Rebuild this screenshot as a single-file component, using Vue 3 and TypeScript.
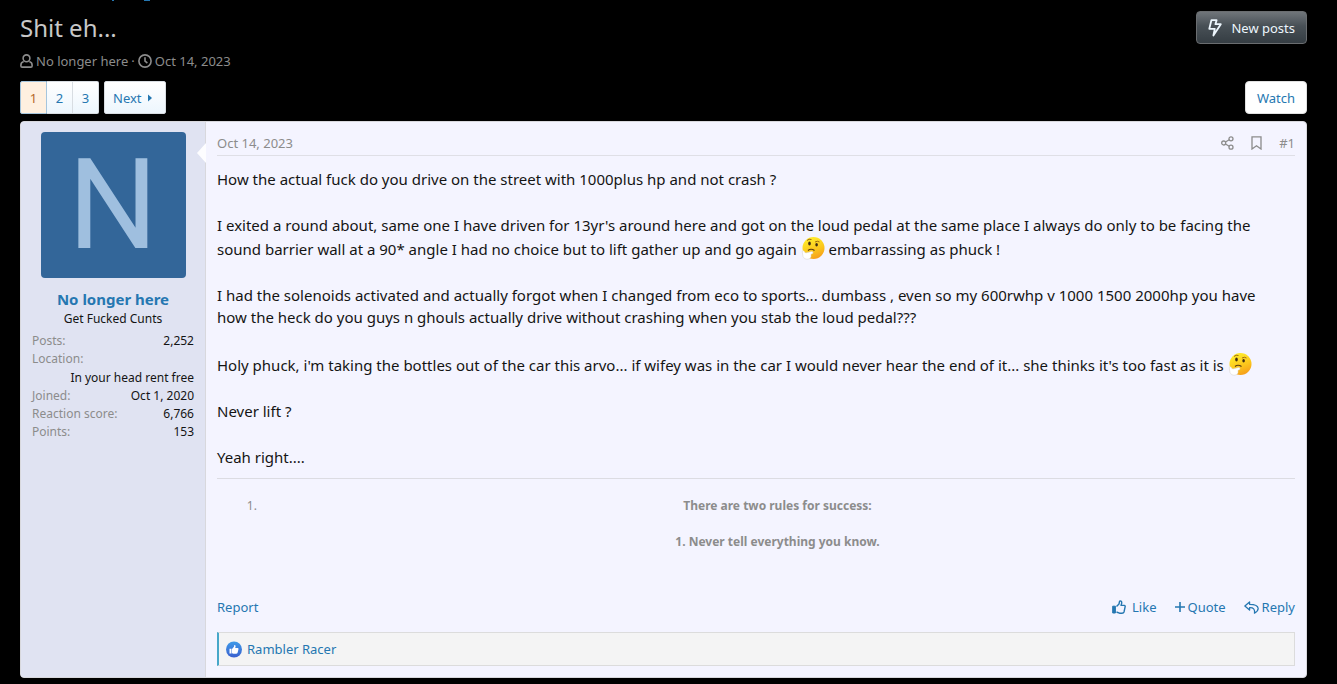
<script setup lang="ts">
import { h } from 'vue'

interface Stat {
  label: string
  value: string
  stacked?: boolean
}

const stats: Stat[] = [
  { label: 'Posts', value: '2,252' },
  { label: 'Location', value: 'In your head rent free', stacked: true },
  { label: 'Joined', value: 'Oct 1, 2020' },
  { label: 'Reaction score', value: '6,766' },
  { label: 'Points', value: '153' },
]

const pages: number[] = [1, 2, 3]

const ThinkingFace = () =>
  h('svg', { viewBox: '0 0 24 24', width: 24, height: 24, role: 'img', 'aria-label': 'Thinking' }, [
    h('defs', [
      h('linearGradient', { id: 'face', x1: 0.3, y1: 0, x2: 0.7, y2: 1 }, [
        h('stop', { offset: 0.1, 'stop-color': '#ffe82a' }),
        h('stop', { offset: 0.6, 'stop-color': '#fbc51c' }),
        h('stop', { offset: 1, 'stop-color': '#f59a1b' }),
      ]),
    ]),
    h('circle', { cx: 12.5, cy: 12, r: 11, fill: 'url(#face)' }),
    h('path', { d: 'M6 4.500Q8 2.500 10.500 3.500M14 6Q16.500 4.500 18.500 6', fill: 'none', stroke: '#a06c12', 'stroke-width': 1 }),
    h('ellipse', { cx: 8.5, cy: 7.5, rx: 1.3, ry: 1.9, fill: '#3e2b14' }),
    h('ellipse', { cx: 15.6, cy: 8.7, rx: 1.3, ry: 1.8, fill: '#3e2b14' }),
    h('path', { d: 'M7 14.500Q10 12 13.500 14.500', fill: 'none', stroke: '#5c3b10', 'stroke-width': 1.2 }),
    h('path', {
      d: 'M1.200 15.500Q2.500 14 3.700 16L4.700 17L10.500 15.500Q12.800 15.500 11.800 17.500L10 18.300L10 21Q9 23.300 6 23.300Q3 23.300 2 20.500Z',
      fill: '#fff',
      stroke: '#d5d0c8',
      'stroke-width': 0.5,
    }),
  ])
</script>

<template>
  <main class="page">
    <svg class="crumb-tails" width="60" height="2" viewBox="0 0 60 2" aria-hidden="true">
      <path d="M12 0h2M44 0h6" stroke="#2577b1" stroke-width="2" />
    </svg>
    <header class="head">
      <div>
        <h1>Shit eh...</h1>
        <p class="meta">
          <svg width="13" height="14" viewBox="0 0 13 14" fill="none" stroke="currentColor" stroke-width="1.600">
            <circle cx="6.500" cy="4.300" r="3.400" />
            <path d="M3.700 7.500Q.9 8.300.9 11V12q0 1.100 1.200 1.100H10.900q1.200 0 1.200-1.100V11Q12.100 8.300 9.300 7.500" />
          </svg>
          <a href="#author">No longer here</a>
          <span>·</span>
          <svg width="14" height="14" viewBox="0 0 14 14" fill="none" stroke="currentColor" stroke-width="1.600">
            <circle cx="7" cy="7" r="6.100" /><path d="M7 3.200V7.200L9.400 9" />
          </svg>
          <a href="#date">Oct 14, 2023</a>
        </p>
      </div>
      <button type="button" class="new-posts">
        <svg width="14" height="18" viewBox="0 0 14 18" fill="none" stroke="currentColor" stroke-width="1.800" stroke-linejoin="round">
          <path d="M3.400 1.200H8.600L7.400 5.200H12.800L5.400 16.500L6.800 9.800H1.300Z" />
        </svg>
        New posts
      </button>
    </header>

    <div class="toolbar">
      <nav class="nav" aria-label="Pages">
        <div class="pages">
          <a v-for="p in pages" :key="p" :href="'#page-' + p" :class="{ current: p === 1 }">{{ p }}</a>
        </div>
        <a class="next" href="#page-2">Next
          <svg width="4" height="8" viewBox="0 0 4 8"><path d="M0 0.500L4 4L0 7.500Z" fill="currentColor" /></svg>
        </a>
      </nav>
      <button type="button" class="watch">Watch</button>
    </div>

    <article class="post">
      <aside class="user">
        <a class="avatar" href="#author" aria-label="No longer here profile"><span>N</span></a>
        <a class="name" href="#author">No longer here</a>
        <p class="rank">Get Fucked Cunts</p>
        <dl>
          <div v-for="s in stats" :key="s.label" :class="{ stacked: s.stacked }">
            <dt>{{ s.label }}:</dt>
            <dd>{{ s.value }}</dd>
          </div>
        </dl>
      </aside>

      <section class="main">
        <header class="post-head">
          <a href="#date">Oct 14, 2023</a>
          <div class="post-tools">
            <a href="#share" aria-label="Share">
              <svg width="13" height="14" viewBox="0 0 13 14" fill="none" stroke="currentColor" stroke-width="1.300">
                <circle cx="2.700" cy="7" r="2" /><circle cx="10" cy="2.800" r="2" /><circle cx="10" cy="11.200" r="2" />
                <path d="M4.500 6L8.200 3.800M4.500 8L8.200 10.200" />
              </svg>
            </a>
            <a href="#bookmark" aria-label="Bookmark">
              <svg width="11" height="14" viewBox="0 0 11 14" fill="none" stroke="currentColor" stroke-width="1.300">
                <path d="M1 .8H10V13L5.500 9.800L1 13Z" />
              </svg>
            </a>
            <a href="#post-1">#1</a>
          </div>
        </header>

        <div class="body">
          <p>How the actual fuck do you drive on the street with 1000plus hp and not crash ?</p>
          <p>
            I exited a round about, same one I have driven for 13yr's around here and got on the loud pedal at the same place I always do only to be facing the<br>
            sound barrier wall at a 90* angle I had no choice but to lift gather up and go again <ThinkingFace class="smilie" /> embarrassing as phuck !
          </p>
          <p>
            I had the solenoids activated and actually forgot when I changed from eco to sports... dumbass , even so my 600rwhp v 1000 1500 2000hp you have<br>
            how the heck do you guys n ghouls actually drive without crashing when you stab the loud pedal???
          </p>
          <p>
            Holy phuck, i'm taking the bottles out of the car this arvo... if wifey was in the car I would never hear the end of it... she thinks it's too fast as it is <ThinkingFace class="smilie" />
          </p>
          <p>Never lift ?</p>
          <p>Yeah right....</p>
        </div>

        <div class="signature">
          <ol>
            <li><b>There are two rules for success:</b><b>1. Never tell everything you know.</b></li>
          </ol>
        </div>

        <footer>
          <a href="#report">Report</a>
          <div class="actions">
            <a class="like" href="#like">
              <svg width="14" height="14" viewBox="0 0 14 14" fill="none" stroke="currentColor" stroke-width="1.400" stroke-linejoin="round">
                <path d="M4.500 6.500L7 4L7.600 1.200Q9.900.5 9.700 3.200L9 5.400H12.200Q13.600 5.700 13 7.300L12 12Q11.600 13.200 10 13.200H7.500L4.500 12" />
                <path d="M.7 6.200H3.400V13H.7Z" fill="currentColor" stroke-width="1" />
              </svg>
              Like
            </a>
            <a href="#quote">
              <svg width="10" height="10" viewBox="0 0 10 10" stroke="currentColor" stroke-width="1.600"><path d="M5 0V10M0 5H10" /></svg>
              Quote
            </a>
            <a href="#reply">
              <svg width="15" height="13" viewBox="0 0 14 12" fill="none" stroke="currentColor" stroke-width="1.200" stroke-linejoin="round">
                <path d="M5.200.8L.8 4.600L5.200 8.400V6.200Q10.500 5.800 9.800 11.200Q13.400 9.500 13.200 6.700Q12.800 3 5.200 3Z" />
              </svg>
              Reply
            </a>
          </div>
        </footer>

        <div class="reactions">
          <svg width="16" height="17" viewBox="0 0 16 16" aria-label="Like" role="img">
            <defs>
              <linearGradient id="like" x1="0" y1="0" x2="0" y2="1"><stop offset="0" stop-color="#3f9be8" /><stop offset="1" stop-color="#3a60cf" /></linearGradient>
            </defs>
            <circle cx="8" cy="8" r="8" fill="url(#like)" />
            <path d="M3.500 7.200H5.500V12H3.500ZM6 7.500L8 5.300L8.300 3.500Q9.800 3.200 9.600 5L9.200 6.500H11.800Q12.900 6.800 12.400 8L11.500 11.500Q11.200 12.200 10 12.200H7.500L6 11.700Z" fill="#fff" />
          </svg>
          <a href="#reactions">Rambler Racer</a>
        </div>
      </section>
    </article>
  </main>
</template>

<style>
body {
  margin: 0;
  background: #000;
}
</style>

<style scoped>
.page {
  position: relative;
  padding: 11px 30px 5px 20px;
  font-family: "Noto Sans", "Open Sans", sans-serif;
  font-size: 13px;
  line-height: 18px;
  color: #141414;
}
.page * {
  box-sizing: border-box;
}
h1, p, dl, dd, ol {
  margin: 0;
}
a {
  color: #2577b1;
  text-decoration: none;
}
button {
  font: inherit;
  cursor: pointer;
}
svg {
  flex: none;
}
.crumb-tails {
  position: absolute;
  top: 0;
  left: 100px;
}
.head,
.toolbar {
  display: flex;
  justify-content: space-between;
  align-items: flex-start;
}
h1 {
  font-size: 24px;
  line-height: 34px;
  font-weight: 400;
  color: #c8c8c8;
}
.meta {
  display: flex;
  align-items: center;
  gap: 3px;
  margin-top: 7px;
  color: #8c8c8c;
}
.meta a {
  color: inherit;
}
.new-posts {
  display: flex;
  align-items: center;
  gap: 9px;
  height: 33px;
  padding: 0 11px;
  border: 1px solid #6a6d70;
  border-radius: 4px;
  background: linear-gradient(#70757a, #485056 45%, #353d43);
  color: #edf6fd;
}
.toolbar {
  margin: 11px 0 7px;
}
.nav {
  display: flex;
  gap: 5px;
}
.pages {
  display: flex;
}
.pages a,
.next {
  display: flex;
  align-items: center;
  justify-content: center;
  min-width: 26px;
  height: 33px;
  border: 1px solid #d8dde2;
  border-left-width: 0;
  background: linear-gradient(#fff, #edf6fd);
}
.pages a:last-child {
  border-radius: 0 2px 2px 0;
}
.pages a.current {
  min-width: 27px;
  border: 1px solid #a5c5dd;
  border-radius: 2px 0 0 2px;
  background: #fff0e0;
  color: #b5692a;
}
.next {
  gap: 6px;
  padding: 0 13px 0 8px;
  border-left-width: 1px;
  border-radius: 2px;
}
.watch {
  height: 33px;
  padding: 0 11px;
  border: 1px solid #e0e0e0;
  border-radius: 4px;
  background: #fff;
  color: #2577b1;
}
.post {
  display: flex;
  border: 1px solid #d8d8dd;
  border-radius: 4px;
  background: #f4f4ff;
}
.user {
  position: relative;
  flex: none;
  width: 185px;
  padding: 10px 11px;
  border-right: 1px solid #d8d8dd;
  border-radius: 3px 0 0 3px;
  background: #e0e3f2;
  text-align: center;
}
.user::after {
  content: "";
  position: absolute;
  top: 21px;
  right: -1px;
  width: 9px;
  height: 20px;
  background: #fdfdff;
  clip-path: polygon(100% 0, 0 50%, 100% 100%);
}
.avatar {
  display: flex;
  align-items: center;
  justify-content: center;
  width: 145px;
  height: 146px;
  margin: 0 auto;
  border-radius: 4px;
  background: #336699;
  color: #9fbfdf;
  font-family: Roboto, sans-serif;
  font-size: 126px;
  line-height: 146px;
}
.name {
  display: block;
  margin-top: 10px;
  font-size: 15px;
  line-height: 22px;
  font-weight: 700;
}
.rank {
  font-size: 12px;
}
dl {
  margin-top: 4px;
  font-size: 12px;
  text-align: right;
}
dl div {
  display: flex;
  justify-content: space-between;
}
dl .stacked {
  display: block;
}
dl .stacked dd {
  margin-top: 1px;
}
dt {
  color: #8c8c8c;
  text-align: left;
}
.main {
  flex: 1;
  min-width: 0;
  padding: 12px 11px 11px;
}
.post-head {
  display: flex;
  justify-content: space-between;
  padding-bottom: 3px;
  border-bottom: 1px solid #dfdfe6;
}
.post-head a {
  color: #8c8c8c;
}
.post-tools {
  display: flex;
  align-items: center;
  gap: 17px;
}
.post-tools a {
  display: flex;
}
.body {
  display: grid;
  gap: 24px;
  padding: 12px 0 10px;
  font-size: 15px;
  line-height: 22px;
}
.smilie {
  height: 24px;
  vertical-align: -5px;
}
.signature {
  padding: 18px 0 29px;
  border-top: 1px solid #dcdce2;
  color: #8c8c8c;
  font-size: 12px;
}
ol {
  padding-left: 43px;
  text-align: center;
}
b {
  display: block;
  margin-bottom: 18px;
}
footer,
.actions,
.actions a {
  display: flex;
  align-items: center;
}
footer {
  justify-content: space-between;
}
.actions {
  gap: 18px;
}
.actions a {
  gap: 3px;
}
.actions .like {
  gap: 6px;
}
.reactions {
  display: flex;
  align-items: center;
  gap: 5px;
  height: 34px;
  margin-top: 16px;
  padding-left: 7px;
  border: 1px solid #dcdcdc;
  border-left: 2px solid #47a7c9;
  background: #f4f4f4;
}
</style>
